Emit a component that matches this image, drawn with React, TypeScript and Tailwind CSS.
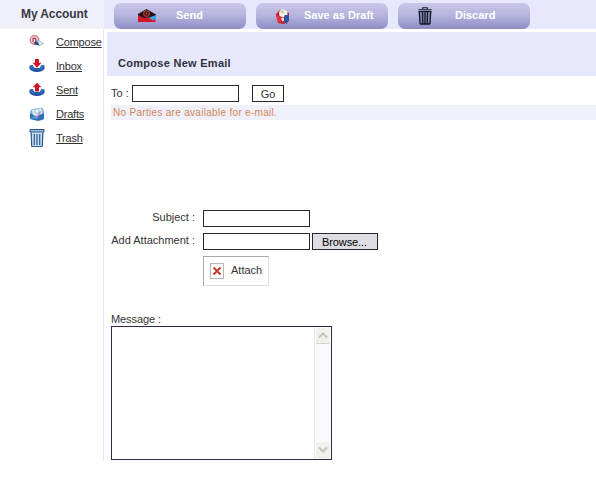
import type { ReactNode } from "react";

function ComposeIcon() {
  return (
    <svg width="16" height="16" viewBox="0 0 16 16">
      <circle cx="5.500" cy="6" r="4.300" fill="#f3dde4" stroke="#d4707f" strokeWidth="1.200" />
      <path d="M4 8V4.300h2.800V8" fill="none" stroke="#a8283c" strokeWidth="1.100" />
      <path d="M8.500 6l6 3.500-4.500 2z" fill="#e6f3fa" stroke="#79b6d8" strokeWidth=".8" />
      <path d="M4.500 8.500l3.500-1.500 2.500 4.500-4-.8z" fill="#3c4779" />
    </svg>
  );
}

function TrayIcon({ up }: { up?: boolean }) {
  return (
    <svg width="16" height="16" viewBox="0 0 16 16">
      <path d="M.5 7.500L3.500 7l2 3h5l2-3 3 .5V11q-2.500 3-7.500 3T.5 11z" fill="#1c4f9c" />
      <path d="M1 8l2.200-.4 2 3.200h5.600l2-3.200L15 8l-2 3.700H3z" fill="#3273bd" />
      <path d={up ? "M8 .8l4.500 4.400H10V9.500H6V5.200H3.500z" : "M6 1h4v3.800h2.500L8 9.800 3.500 4.800H6z"} fill="#cf1628" />
    </svg>
  );
}

function DraftsIcon() {
  return (
    <svg width="16" height="16" viewBox="0 0 16 16">
      <path d="M1 5l2-2 10-1.500L15 5v8l-3 1.500L1 13z" fill="#85b6e1" />
      <path d="M3 4l9-2 1.500 6-5 3L4 9z" fill="#dcebf6" />
      <circle cx="8" cy="5" r="2.200" fill="#fbfaf0" stroke="#8aaccb" strokeWidth=".8" />
      <path d="M1 7l6 3.500L15 7v6l-6 2-8-2z" fill="#2d70b8" />
      <path d="M1 12.500l5.500-3 2.500 3" fill="#5f9fdc" />
      <path d="M11.500 5.500L8 12" stroke="#b77fa8" strokeWidth="1.300" />
    </svg>
  );
}

function TrashIcon() {
  return (
    <svg width="16" height="20" viewBox="0 0 16 20">
      <path d="M1.500 4.500h13l-.8 14H2.300z" fill="#c4dced" />
      <path d="M1 1.500h14v2.500H1z" fill="#9cbfdc" stroke="#245387" />
      <path d="M2.200 4.500l.5 14M5.300 6v11M8 6v11M10.700 6v11M13.800 4.500l-.5 14M2.500 18.500h11" fill="none" stroke="#2b5c92" strokeWidth="1.200" />
    </svg>
  );
}

function DiscardIcon() {
  return (
    <svg width="16" height="18" viewBox="0 0 16 18">
      <path d="M2 4h12l-1 13H3z" fill="#8f8dad" />
      <path d="M5.800 2V.8h4.400V2M1.500 2.800h13M1.500 4.500h13" fill="none" stroke="#11132b" strokeWidth="1.100" />
      <path d="M2.300 5l.8 12M5.500 5l.3 12M8 5v12M10.500 5l-.3 12M13.700 5l-.8 12M3 17h10" fill="none" stroke="#11132b" strokeWidth="1.300" />
    </svg>
  );
}

function SendIcon() {
  return (
    <svg width="18" height="14" viewBox="0 0 18 14">
      <path d="M0 5L8.500 0 18 5.500V9L9 12 0 9z" fill="#25131b" />
      <circle cx="8.500" cy="4.500" r="2.800" fill="none" stroke="#b9402f" strokeWidth="1.100" />
      <circle cx="8.500" cy="4.500" r=".9" fill="#d65037" />
      <path d="M0 6l6 3 6-1 5.500 1v4H0z" fill="#d01826" />
      <path d="M11 8.500l7-2.500v4.500l-4 .7z" fill="#3f9fdc" />
    </svg>
  );
}

function SaveIcon() {
  return (
    <svg width="16" height="17" viewBox="0 0 16 17">
      <path d="M1 6l4-4 9 3v8l-5 3-6-1z" fill="#c91b2d" />
      <path d="M4 4l3-3 5 2 .5 4L8 9.500 4.500 8z" fill="#f3efe9" />
      <circle cx="7.500" cy="4" r="1.700" fill="#c3d1ad" />
      <path d="M1 7l5 2-1 3 2 3-4-.5z" fill="#e3313b" />
      <path d="M5.500 10.500l3-1 1 3-2 1z" fill="#f0d8dc" />
      <path d="M9.500 7H14v5l-2.500 4-2.500-3z" fill="#2956a6" />
    </svg>
  );
}

function ToolButton({ icon, label, spacing }: { icon: ReactNode; label: string; spacing: string }) {
  return (
    <button className={`flex h-[26px] w-[132px] items-center rounded-[7px] bg-linear-to-b from-[#cac7e9] via-[#b5b2dd] to-[#8f8cc5] text-[11px] font-bold text-white ${spacing}`}>
      {icon}
      <span className="pb-[2px] whitespace-nowrap">{label}</span>
    </button>
  );
}

const folders = [
  { label: "Compose", icon: <ComposeIcon /> },
  { label: "Inbox", icon: <TrayIcon /> },
  { label: "Sent", icon: <TrayIcon up /> },
  { label: "Drafts", icon: <DraftsIcon /> },
  { label: "Trash", icon: <TrashIcon /> },
];

export default function App() {
  return (
    <div className="h-[477px] w-[596px] overflow-hidden bg-white font-['Liberation_Sans',Arial,sans-serif] text-[11px] leading-[14px] text-[#333]">
      <header className="flex h-[29px] bg-[#e8e8fd]">
        <div className="w-[104px] bg-[#f0f0fa] pt-[7px] pl-[21px] text-[12px] font-bold tracking-[-0.1px] text-[#373742]">My Account</div>
        <div className="flex gap-[10px] pt-[3px] pl-[10px]">
          <ToolButton label="Send" icon={<SendIcon />} spacing="gap-[20px] pl-[24px]" />
          <ToolButton label="Save as Draft" icon={<SaveIcon />} spacing="gap-[13px] pl-[19px]" />
          <ToolButton label="Discard" icon={<DiscardIcon />} spacing="gap-[22px] pl-[19px]" />
        </div>
      </header>
      <div className="flex">
        <nav className="h-[432px] w-[104px] shrink-0 border-r border-[#e8e8f4] pt-px">
          {folders.map((f) => (
            <a key={f.label} className="flex h-6 items-center pl-[29px]">
              <span className="flex w-[27px]">{f.icon}</span>
              <span className="tracking-[-0.2px] text-[#303030] underline underline-offset-1">{f.label}</span>
            </a>
          ))}
        </nav>
        <main className="flex-1 pt-[3px] pl-[3px]">
          <h1 className="h-[44px] bg-[#e8e8fd] pt-[24px] pl-[11px] text-[11px] font-bold tracking-[0.28px] text-[#30303c]">Compose New Email</h1>
          <div className="pl-1">
            <div className="flex h-[29px] items-center pt-[6px]">
              <label className="w-[21px] pb-px whitespace-nowrap">To :</label>
              <input className="h-[17px] w-[107px] border border-[#29262e] bg-white" />
              <button className="ml-[13px] h-[17px] w-[32px] border border-[#29262e] pt-px leading-[15px]">Go</button>
            </div>
            <p className="h-[15px] bg-[#f0f0fa] pl-[2px] text-[10px] leading-[15px] tracking-[0.3px] text-[#d08657]">No Parties are available for e-mail.</p>
            <div className="mt-[90px] grid grid-cols-[84px_1fr] gap-x-2 gap-y-[6px]">
              <label className="text-right">Subject :</label>
              <input className="h-[17px] w-[107px] border border-[#29262e]" />
              <label className="text-right whitespace-nowrap">Add Attachment :</label>
              <div className="flex gap-[2px]">
                <input className="h-[17px] w-[107px] border border-[#29262e]" />
                <button className="h-[17px] w-[66px] border border-[#29262e] bg-[#dedde3] pr-px leading-[16px] tracking-[-0.1px] text-black">Browse...</button>
              </div>
              <button className="col-start-2 flex h-[30px] w-[66px] items-center border border-t-[#aaa] border-r-[#e3dfd8] border-b-[#e3dfd8] border-l-[#aaa] pl-[6px]">
                <span className="flex h-[16px] w-[14px] items-center justify-center border border-[#b6b6b6]">
                  <svg width="10" height="10" viewBox="0 0 10 10">
                    <path d="M1.500 1.500l7 7M8.500 1.500l-7 7" stroke="#c83223" strokeWidth="1.800" />
                  </svg>
                </span>
                <span className="pb-[2px] pl-[7px]">Attach</span>
              </button>
            </div>
            <label className="mt-[26px] block h-[14px] tracking-[-0.1px]">Message :</label>
            <div className="flex h-[134px] w-[221px] border border-[#2c2850]">
              <textarea className="h-full flex-1 resize-none outline-none" />
              <div className="flex w-[17px] flex-col justify-between border-l border-[#ebe9e4] bg-[#fafafd] py-px pl-px">
                <span className="flex h-[16px] w-[14px] items-center justify-center rounded-[2px] border-b border-[#d4d3c5] bg-[#f0f0ed]">
                  <svg width="10" height="7" viewBox="0 0 10 7"><path d="M1 5.500l4-4 4 4" fill="none" stroke="#c5c5b5" strokeWidth="2" /></svg>
                </span>
                <span className="flex h-[16px] w-[14px] items-center justify-center rounded-[2px] border-b border-[#e4e3dc] bg-[#f0f0ed]">
                  <svg width="10" height="7" viewBox="0 0 10 7"><path d="M1 1.500l4 4 4-4" fill="none" stroke="#c5c5b5" strokeWidth="2" /></svg>
                </span>
              </div>
            </div>
          </div>
        </main>
      </div>
    </div>
  );
}
